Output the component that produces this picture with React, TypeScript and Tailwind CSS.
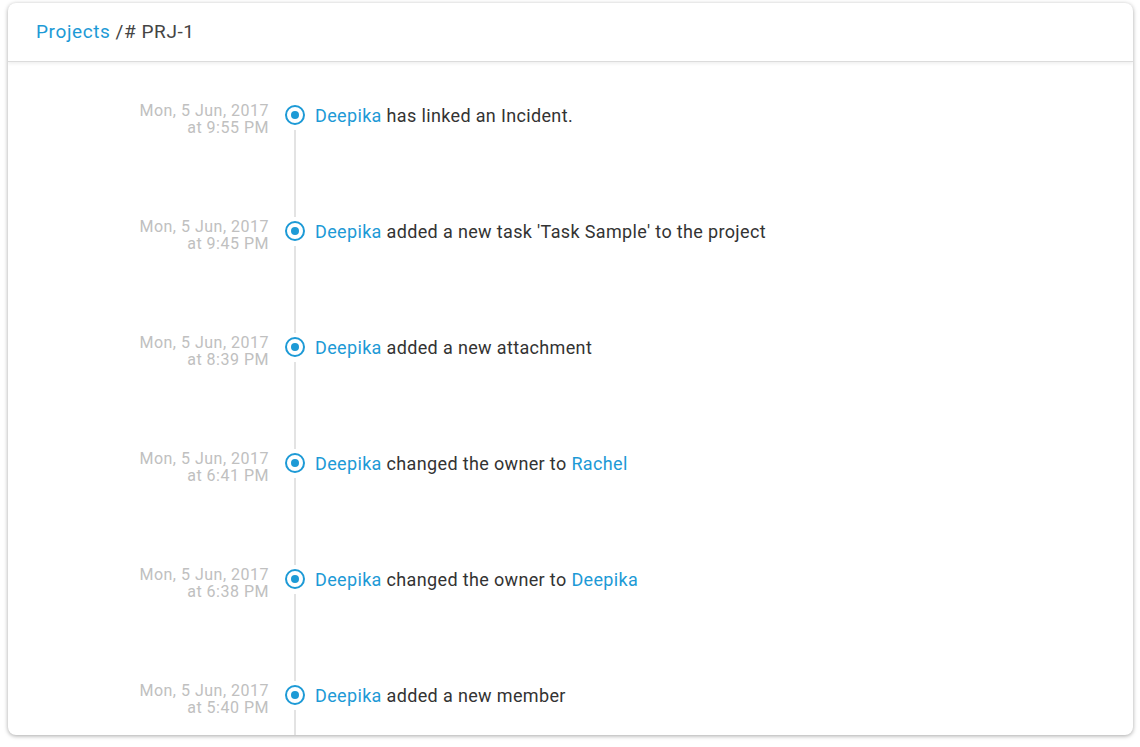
const BLUE = 'text-[#1d9ad6]';

type Entry = {
  date: string;
  time: string;
  parts: { text: string; link?: boolean }[];
};

const entries: Entry[] = [
  { date: 'Mon, 5 Jun, 2017', time: 'at 9:55 PM', parts: [{ text: 'Deepika', link: true }, { text: ' has linked an Incident.' }] },
  { date: 'Mon, 5 Jun, 2017', time: 'at 9:45 PM', parts: [{ text: 'Deepika', link: true }, { text: " added a new task 'Task Sample' to the project" }] },
  { date: 'Mon, 5 Jun, 2017', time: 'at 8:39 PM', parts: [{ text: 'Deepika', link: true }, { text: ' added a new attachment' }] },
  { date: 'Mon, 5 Jun, 2017', time: 'at 6:41 PM', parts: [{ text: 'Deepika', link: true }, { text: ' changed the owner to ' }, { text: 'Rachel', link: true }] },
  { date: 'Mon, 5 Jun, 2017', time: 'at 6:38 PM', parts: [{ text: 'Deepika', link: true }, { text: ' changed the owner to ' }, { text: 'Deepika', link: true }] },
  { date: 'Mon, 5 Jun, 2017', time: 'at 5:40 PM', parts: [{ text: 'Deepika', link: true }, { text: ' added a new member' }] },
];

function Dot() {
  return (
    <div className="w-5 h-5 rounded-full border-2 border-[#1d9ad6] flex items-center justify-center shrink-0 bg-white">
      <div className="w-2 h-2 rounded-full bg-[#1d9ad6]" />
    </div>
  );
}

function App() {
  return (
    <div className="w-[1140px] h-[747px] bg-white pt-[3px] pl-[8px] font-['Roboto',sans-serif]">
      <div className="w-[1125px] h-[732px] bg-white rounded-lg shadow-[0_1px_4px_rgba(0,0,0,0.35)] overflow-hidden flex flex-col">
        {/* Header */}
        <div className="h-[59px] shrink-0 flex items-center pl-[28px] border-b border-[#dcdcdc] shadow-[0_2px_3px_rgba(0,0,0,0.06)] relative z-10">
          <span className={`text-[19px] tracking-[0.6px] ${BLUE}`}>Projects</span>
          <span className="text-[19px] tracking-[0.6px] text-[#444] ml-[5px]">/# PRJ-1</span>
        </div>

        {/* Timeline */}
        <div className="flex-1 overflow-hidden pt-[43px]">
          {entries.map((e, i) => (
            <div key={i} className="h-[116px] flex items-stretch">
              <div className="w-[261px] shrink-0 text-right text-[16px] tracking-[0.5px] leading-[17px] text-[#c0c0c0] -mt-[3px]">
                <div>{e.date}</div>
                <div>{e.time}</div>
              </div>
              <div className="w-5 ml-[16px] flex flex-col items-center shrink-0">
                <Dot />
                <div className="w-[2px] flex-1 bg-[#e3e3e3] mt-[5px] mb-[4px]" />
              </div>
              <div className="ml-[10px] pt-[1px] text-[18px] tracking-[0.35px] leading-5 text-[#333]">
                {e.parts.map((p, j) => (
                  <span key={j} className={p.link ? BLUE : ''}>{p.text}</span>
                ))}
              </div>
            </div>
          ))}
        </div>
      </div>
    </div>
  );
}

export default App;
